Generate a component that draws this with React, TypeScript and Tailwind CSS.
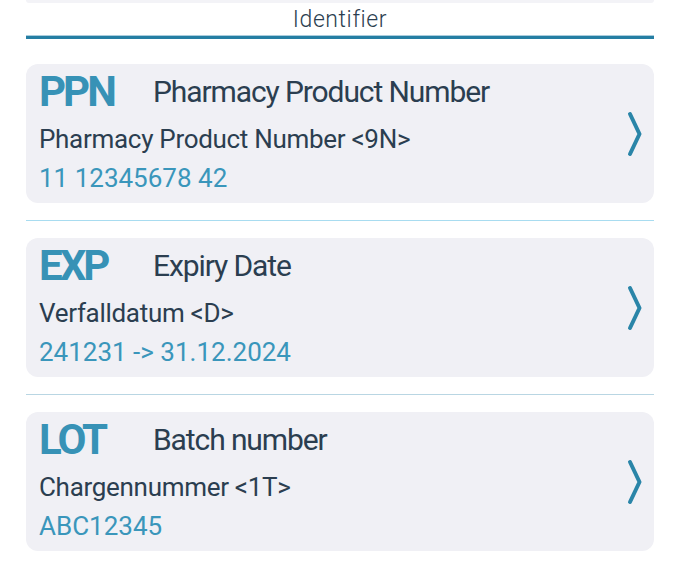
import React from "react";

type Item = { code: string; title: string; desc: string; value: string };

const items: Item[] = [
  {
    code: "PPN",
    title: "Pharmacy Product Number",
    desc: "Pharmacy Product Number <9N>",
    value: "11 12345678 42",
  },
  {
    code: "EXP",
    title: "Expiry Date",
    desc: "Verfalldatum <D>",
    value: "241231 -> 31.12.2024",
  },
  {
    code: "LOT",
    title: "Batch number",
    desc: "Chargennummer <1T>",
    value: "ABC12345",
  },
];

function Chevron() {
  return (
    <svg width="16" height="46" viewBox="0 0 16 46" className="shrink-0">
      <path
        d="M3 3 L12.5 23 L3 43"
        fill="none"
        stroke="#2a85a8"
        strokeWidth="4"
        strokeLinecap="round"
        strokeLinejoin="round"
      />
    </svg>
  );
}

function Card({ item }: { item: Item }) {
  return (
    <div className="flex h-[139px] items-center rounded-[12px] bg-[#f0f0f5] pl-[13px] pr-[11px]">
      <div className="flex min-w-0 flex-1 flex-col">
        <div className="flex h-[44px] items-center">
          <span className="w-[114px] text-[42px] font-bold leading-none tracking-[-3px] text-[#3792b6]">
            {item.code}
          </span>
          <span className="text-[30px] leading-none tracking-[-1.1px] text-[#2b3e50]">
            {item.title}
          </span>
        </div>
        <div className="mt-[5px] text-[26px] leading-[40px] tracking-[-0.3px] text-[#2b3e50]">
          {item.desc}
        </div>
        <div className="text-[26px] leading-[38px] text-[#3a96bb]">
          {item.value}
        </div>
      </div>
      <Chevron />
    </div>
  );
}

export default function App() {
  return (
    <div
      className="h-[570px] w-[680px] overflow-hidden bg-white"
      style={{ fontFamily: '"Roboto", "Liberation Sans", sans-serif' }}
    >
      <div className="mx-[26px] h-[3px] rounded-b-[12px] bg-[#f3f3f7]" />
      <div className="pt-[2px] text-center text-[23px] font-light leading-[29px] tracking-[0.6px] text-[#2b3e50]">
        Identifier
      </div>
      <div className="mx-[26px] mt-[1px] h-[4px] border-t border-[#a9cddd] bg-[#257ea3]" />
      <div className="mx-[26px] mt-[25px] flex flex-col">
        {items.map((item, i) => (
          <React.Fragment key={item.code}>
            {i > 0 && (
              <div
                className={
                  i === 1
                    ? "my-[17px] h-px bg-[#a8dcf0]"
                    : "my-[17px] h-px bg-[#b9d6e3]"
                }
              />
            )}
            <Card item={item} />
          </React.Fragment>
        ))}
      </div>
    </div>
  );
}
